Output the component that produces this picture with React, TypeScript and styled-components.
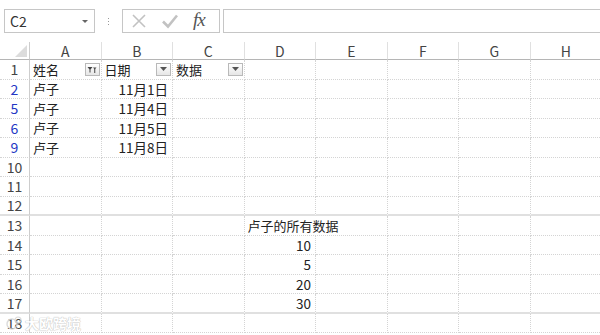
import React from 'react';
import styled, { createGlobalStyle, css } from 'styled-components';

const GlobalStyle = createGlobalStyle`
    body {
        margin: 0;
        background: #fff;
        overflow: hidden;
    }
    * {
        box-sizing: border-box;
    }
`

const FONT = `"Noto Sans CJK SC", "Noto Sans", sans-serif`
const GRID = '#d4d4d4'
const COLS = ['A', 'B', 'C', 'D', 'E', 'F', 'G', 'H']

type CellValue = { text: string; align?: 'left' | 'right'; span?: number }

type RowData = {
    num: number;
    filtered?: boolean;
    thick?: boolean;
    cells: Record<string, CellValue>;
}

const rows: RowData[] = [
    { num: 2, filtered: true, cells: { A: { text: '卢子' }, B: { text: '11月1日', align: 'right' } } },
    { num: 5, filtered: true, cells: { A: { text: '卢子' }, B: { text: '11月4日', align: 'right' } } },
    { num: 6, filtered: true, cells: { A: { text: '卢子' }, B: { text: '11月5日', align: 'right' } } },
    { num: 9, filtered: true, cells: { A: { text: '卢子' }, B: { text: '11月8日', align: 'right' } } },
    { num: 10, cells: {} },
    { num: 11, cells: {} },
    { num: 12, thick: true, cells: {} },
    { num: 13, cells: { D: { text: '卢子的所有数据', span: 2 } } },
    { num: 14, cells: { D: { text: '10', align: 'right' } } },
    { num: 15, cells: { D: { text: '5', align: 'right' } } },
    { num: 16, cells: { D: { text: '20', align: 'right' } } },
    { num: 17, thick: true, cells: { D: { text: '30', align: 'right' } } },
    { num: 18, cells: {} },
]

const DropArrow = () => (
    <svg width="7" height="4" viewBox="0 0 7 4">
        <path d="M0 0 L7 0 L3.5 4 Z" fill="#555" />
    </svg>
)

const App = (): JSX.Element => {
    return (
        <Page>
            <GlobalStyle />
            <FormulaBar>
                <NameBox>
                    <span>C2</span>
                    <SmallArrow />
                </NameBox>
                <Grip>
                    <i /><i /><i />
                </Grip>
                <IconBox>
                    <svg width="16" height="16" viewBox="0 0 16 16">
                        <path d="M2 2 L14 14 M14 2 L2 14" stroke="#c2c2c2" strokeWidth="1.6" fill="none" />
                    </svg>
                    <svg width="18" height="16" viewBox="0 0 18 16">
                        <path d="M2 8.5 L7 13.5 L16 2.5" stroke="#c2c2c2" strokeWidth="2.6" fill="none" />
                    </svg>
                    <Fx>fx</Fx>
                </IconBox>
                <FormulaInput />
            </FormulaBar>
            <Sheet>
                <Corner>
                    <svg width="12" height="12" viewBox="0 0 12 12">
                        <path d="M12 0 L12 12 L0 12 Z" fill="#dcdcdc" />
                    </svg>
                </Corner>
                {COLS.map((c) => (
                    <ColHead key={c}>{c}</ColHead>
                ))}

                <RowHead>1</RowHead>
                <Cell>
                    <HeaderCell>
                        <span>姓名</span>
                        <FilterButton>
                            <svg width="10" height="9" viewBox="0 0 10 9">
                                <path d="M0.5 2 L5.5 2 L3.5 4.5 L3.5 7.5 L2.5 7.5 L2.5 4.5 Z" fill="#444" />
                                <path d="M6 2.5 L9.5 2.5 L7.75 4.5 Z" fill="#444" />
                                <rect x="7.25" y="4" width="1" height="4" fill="#444" />
                            </svg>
                        </FilterButton>
                    </HeaderCell>
                </Cell>
                <Cell>
                    <HeaderCell>
                        <span>日期</span>
                        <FilterButton>
                            <DropArrow />
                        </FilterButton>
                    </HeaderCell>
                </Cell>
                <Cell>
                    <HeaderCell>
                        <span>数据</span>
                        <FilterButton>
                            <DropArrow />
                        </FilterButton>
                    </HeaderCell>
                </Cell>
                {COLS.slice(3).map((c) => (
                    <Cell key={c} />
                ))}

                {rows.map((r) => {
                    const out: JSX.Element[] = [
                        <RowHead key={`h${r.num}`} $filtered={r.filtered} $thick={r.thick}>
                            {r.num}
                        </RowHead>,
                    ]
                    let skip = 0
                    COLS.forEach((c) => {
                        if (skip > 0) {
                            skip--
                            return
                        }
                        const v = r.cells[c]
                        const span = v?.span ?? 1
                        skip = span - 1
                        out.push(
                            <Cell key={`${r.num}${c}`} $align={v?.align} $span={span} $thick={r.thick}>
                                {v?.text}
                            </Cell>
                        )
                    })
                    return out
                })}
            </Sheet>
            <Watermark>
                <svg width="16" height="14" viewBox="0 0 16 14">
                    <circle cx="6" cy="8" r="5" fill="none" stroke="#d6d6d6" strokeWidth="1.5" />
                    <circle cx="12" cy="4" r="3" fill="none" stroke="#d6d6d6" strokeWidth="1.2" />
                </svg>
                <span>大欧跨境</span>
            </Watermark>
        </Page>
    );
};

const Page = styled.div`
    position: relative;
    width: 600px;
    height: 335px;
    overflow: hidden;
    font-family: ${FONT};
    background: #fff;
`

const FormulaBar = styled.div`
    height: 42px;
    padding: 9px 0 0 4px;
    display: flex;
    align-items: flex-start;
`

const NameBox = styled.div`
    width: 91px;
    height: 24px;
    border: 1px solid #c6c6c6;
    display: flex;
    align-items: center;
    justify-content: space-between;
    padding: 0 6px 0 5px;
    font-size: 14px;
    color: #333;
`

const SmallArrow = styled.i`
    width: 0;
    height: 0;
    border-left: 3px solid transparent;
    border-right: 3px solid transparent;
    border-top: 3px solid #666;
`

const Grip = styled.div`
    width: 27px;
    height: 24px;
    display: flex;
    flex-direction: column;
    align-items: center;
    justify-content: center;
    gap: 2px;
    i {
        width: 1px;
        height: 1px;
        background: #999;
    }
`

const IconBox = styled.div`
    width: 98px;
    height: 24px;
    border: 1px solid #c6c6c6;
    display: flex;
    align-items: center;
    padding: 0 0 0 8px;
    gap: 14px;
`

const Fx = styled.span`
    font-family: "Liberation Serif", serif;
    font-style: italic;
    font-size: 19px;
    color: #555;
    letter-spacing: -1px;
    margin-top: -3px;
`

const FormulaInput = styled.div`
    flex: 1;
    height: 24px;
    margin-left: 3px;
    border: 1px solid #c6c6c6;
    border-right: none;
`

const Sheet = styled.div`
    display: grid;
    grid-template-columns: 30px repeat(8, 71.5px);
    grid-template-rows: 18px;
    grid-auto-rows: 19.5px;
    font-size: 13px;
    color: #222;
`

const Corner = styled.div`
    border-right: 1px solid #cdcdcd;
    border-bottom: 1px solid #b5b5b5;
    display: flex;
    align-items: flex-end;
    justify-content: flex-end;
    padding: 0 2px 2px 0;
`

const ColHead = styled.div`
    border-right: 1px solid #e0e0e0;
    border-bottom: 1px solid #b5b5b5;
    display: flex;
    align-items: center;
    justify-content: center;
    color: #444;
    font-size: 14px;
`

const RowHead = styled.div<{ $filtered?: boolean; $thick?: boolean }>`
    border-right: 1px solid #cdcdcd;
    border-bottom: ${(p) => (p.$thick ? '2px solid #e0e0e0' : `1px dotted ${GRID}`)};
    display: flex;
    align-items: center;
    justify-content: center;
    color: ${(p) => (p.$filtered ? '#2336c4' : '#444')};
    font-size: 14px;
`

const Cell = styled.div<{ $align?: 'left' | 'right'; $span?: number; $thick?: boolean }>`
    grid-column: span ${(p) => p.$span ?? 1};
    border-right: 1px dotted ${GRID};
    border-bottom: ${(p) => (p.$thick ? '2px solid #e0e0e0' : `1px dotted ${GRID}`)};
    display: flex;
    align-items: center;
    white-space: nowrap;
    padding: 0 4px 0 3px;
    ${(p) =>
        p.$align === 'right' &&
        css`
            justify-content: flex-end;
            font-size: 13.5px;
        `}
`

const HeaderCell = styled.div`
    flex: 1;
    display: flex;
    align-items: center;
    justify-content: space-between;
    margin-right: -3px;
`

const FilterButton = styled.div`
    width: 15px;
    height: 13px;
    border: 1px solid #b9b9b9;
    background: linear-gradient(#ffffff, #e6e6e6);
    display: flex;
    align-items: center;
    justify-content: center;
`

const Watermark = styled.div`
    position: absolute;
    left: 6px;
    bottom: 2px;
    display: flex;
    align-items: center;
    gap: 3px;
    font-size: 14px;
    font-weight: bold;
    color: #fff;
    text-shadow: 0 0 1px #b0b0b0, 0 0 1px #b0b0b0;
    opacity: 0.85;
`

export default App;
